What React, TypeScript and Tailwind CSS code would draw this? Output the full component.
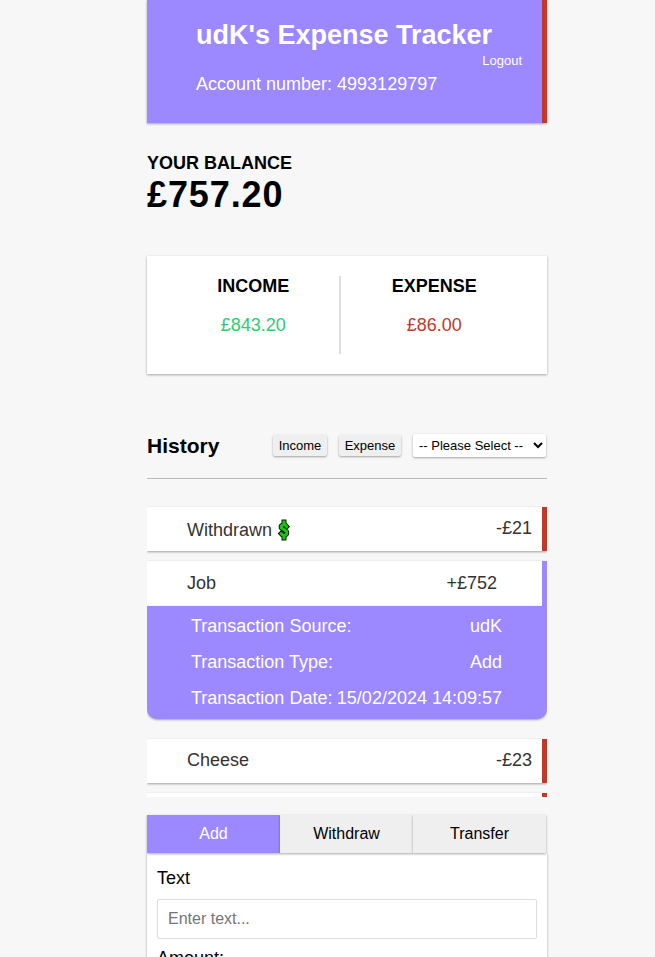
import { useState } from "react";

const shadow = "shadow-[0_1px_3px_rgba(0,0,0,0.12),0_1px_2px_rgba(0,0,0,0.24)]";

const dollarPath = "M7 3V5M7 17V19M9.6 7.6 7.8 5.6H6L4.2 7.2V8.8L9.6 12.6V14.8L7.8 16.4H6L4.2 14.6";

function DollarIcon() {
  return (
    <svg width="14" height="22" viewBox="0 0 14 22" role="img" aria-label="dollar" fill="none" strokeLinejoin="round">
      <path d={dollarPath} stroke="#101810" strokeWidth="5" strokeLinecap="square" />
      <path d={dollarPath} stroke="#16c60c" strokeWidth="3" strokeLinecap="square" />
    </svg>
  );
}

function Transaction({ name, amount, icon = false }: { name?: string; amount?: string; icon?: boolean }) {
  return (
    <li className={`mb-2.5 flex h-11 items-center justify-between border-r-[5px] border-[#c0392b] bg-white pb-0.5 pl-10 pr-2.5 text-[#333] ${shadow}`}>
      <span className={icon ? "flex items-center gap-[5px] pt-1" : ""}>
        {name}
        {icon && <DollarIcon />}
      </span>
      <span>{amount}</span>
    </li>
  );
}

const details = [
  ["Transaction Source:", "udK"],
  ["Transaction Type:", "Add"],
  ["Transaction Date:", "15/02/2024 14:09:57"],
];

const tabs = ["Add", "Withdraw", "Transfer"];

export default function App() {
  const [tab, setTab] = useState("Add");
  return (
    <div className="h-screen overflow-hidden bg-[#f7f7f7] font-['Liberation_Sans',Arial,sans-serif] text-lg text-black">
      <main className="mx-auto max-w-[439px] pl-[39px]">
        <header className={`border-r-[5px] border-[#c0392b] bg-[#9c88ff] pb-[26px] pl-[49px] pr-5 pt-5 text-white ${shadow}`}>
          <h1 className="text-[27px] font-bold leading-[31px]">udK's Expense Tracker</h1>
          <div className="flex justify-end">
            <button type="button" className="text-[13px] leading-5">Logout</button>
          </div>
          <p className="leading-[26px]">Account number: 4993129797</p>
        </header>

        <section className="mt-[30px]">
          <h2 className="font-bold leading-5">YOUR BALANCE</h2>
          <p className="text-4xl/[44px] font-bold tracking-wide">£757.20</p>
        </section>

        <section className={`mt-[39px] flex bg-white p-5 text-center leading-[21px] ${shadow}`}>
          <div className="flex flex-auto flex-col gap-[18px] border-r-2 border-[#dedede] pb-[18px]">
            <h3 className="font-bold">INCOME</h3>
            <p className="text-[#2ecc71]">£843.20</p>
          </div>
          <div className="flex flex-auto flex-col gap-[18px] pb-[18px]">
            <h3 className="font-bold">EXPENSE</h3>
            <p className="text-[#c0392b]">£86.00</p>
          </div>
        </section>

        <section className="mt-[60px]">
          <div className="flex items-start border-b border-[#bbb] pb-5 pr-px text-[13px]">
            <h2 className="mr-auto text-[21px] font-bold leading-6">History</h2>
            <button type="button" className={`mr-3 mt-px h-[21px] w-[54px] rounded-xs bg-[#efefef] leading-[21px] ${shadow}`}>Income</button>
            <button type="button" className={`mr-3 mt-px h-[21px] w-[62px] rounded-xs bg-[#efefef] leading-[21px] ${shadow}`}>Expense</button>
            <select aria-label="Filter by type" className={`h-[23px] w-[133px] rounded-xs bg-white px-0.5 ${shadow}`}>
              <option>-- Please Select --</option>
            </select>
          </div>

          <ul className="mt-[18px] max-h-[300px] overflow-y-auto pt-2.5 [scrollbar-width:none]">
            <Transaction name="Withdrawn" amount="-£21" icon />
            <li className="mb-5">
              <div className={`flex h-[45px] items-center justify-between border-r-[5px] border-[#9c88ff] bg-white pb-0.5 pl-10 pr-[45px] text-[#333] ${shadow}`}>
                <span>Job</span>
                <span>+£752</span>
              </div>
              <dl className={`relative rounded-b-[10px] bg-[#9c88ff] pb-[3px] pl-11 pr-[45px] pt-0.5 leading-9 text-white ${shadow}`}>
                {details.map(([label, value]) => (
                  <div key={label} className="flex justify-between">
                    <dt>{label}</dt>
                    <dd>{value}</dd>
                  </div>
                ))}
              </dl>
            </li>
            <Transaction name="Cheese" amount="-£23" />
            <Transaction />
          </ul>
        </section>

        <div className="mt-[18px] flex pr-px text-base">
          {tabs.map((name) => (
            <button
              key={name}
              type="button"
              onClick={() => setTab(name)}
              className={`h-[38px] flex-1 ${shadow} ${tab === name ? "bg-[#9c88ff] text-white" : "bg-[#efefef]"}`}
            >
              {name}
            </button>
          ))}
        </div>

        <form className={`bg-white px-2.5 pb-5 pt-3.5 leading-[22px] ${shadow}`}>
          <label htmlFor="text" className="block">Text</label>
          <input id="text" type="text" placeholder="Enter text..." className="mt-2.5 block h-10 w-full rounded-xs border border-[#dedede] px-2.5 text-base placeholder:text-[#757575]" />
          <label htmlFor="amount" className="mt-2 block">Amount:</label>
          <input id="amount" type="number" className="mt-2.5 block h-10 w-full rounded-xs border border-[#dedede] px-2.5 text-base" />
        </form>
      </main>
    </div>
  );
}
